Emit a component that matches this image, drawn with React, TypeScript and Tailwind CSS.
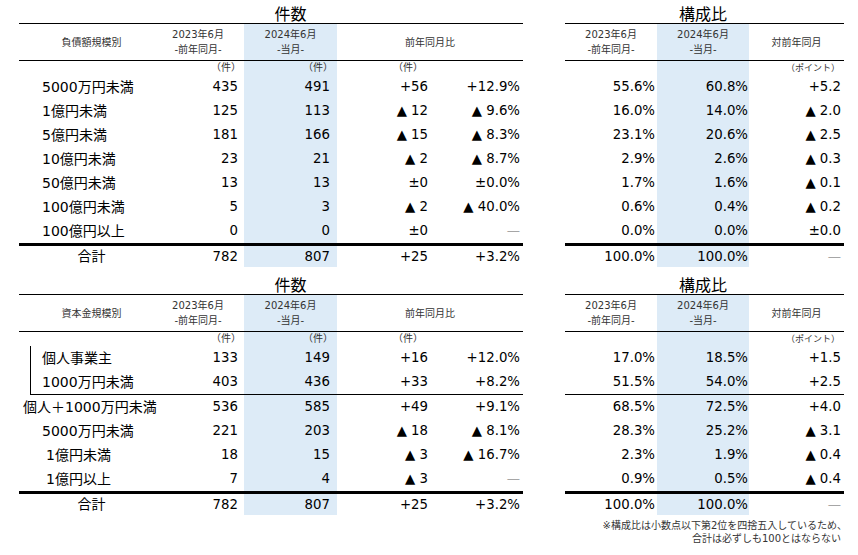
import React from "react"

const HL = "bg-[#ddebf7]"
const L_COLS = "grid-cols-[133px_92px_93px_93px_93px]"
const L_COLS_IN = "grid-cols-[121px_92px_93px_93px_93px]"
const R_COLS = "grid-cols-[92px_92px_95px]"

type Line = { label: string; v: string[]; r: string[] }

const debt: Line[] = [
  { label: "5000万円未満", v: ["435", "491", "+56", "+12.9%"], r: ["55.6%", "60.8%", "+5.2"] },
  { label: "1億円未満", v: ["125", "113", "▲ 12", "▲ 9.6%"], r: ["16.0%", "14.0%", "▲ 2.0"] },
  { label: "5億円未満", v: ["181", "166", "▲ 15", "▲ 8.3%"], r: ["23.1%", "20.6%", "▲ 2.5"] },
  { label: "10億円未満", v: ["23", "21", "▲ 2", "▲ 8.7%"], r: ["2.9%", "2.6%", "▲ 0.3"] },
  { label: "50億円未満", v: ["13", "13", "±0", "±0.0%"], r: ["1.7%", "1.6%", "▲ 0.1"] },
  { label: "100億円未満", v: ["5", "3", "▲ 2", "▲ 40.0%"], r: ["0.6%", "0.4%", "▲ 0.2"] },
  { label: "100億円以上", v: ["0", "0", "±0", "—"], r: ["0.0%", "0.0%", "±0.0"] },
]

const capSub: Line[] = [
  { label: "個人事業主", v: ["133", "149", "+16", "+12.0%"], r: ["17.0%", "18.5%", "+1.5"] },
  { label: "1000万円未満", v: ["403", "436", "+33", "+8.2%"], r: ["51.5%", "54.0%", "+2.5"] },
]

const capRest: (Line & { pad: string })[] = [
  { label: "個人＋1000万円未満", pad: "pl-[4px]", v: ["536", "585", "+49", "+9.1%"], r: ["68.5%", "72.5%", "+4.0"] },
  { label: "5000万円未満", pad: "pl-[23px]", v: ["221", "203", "▲ 18", "▲ 8.1%"], r: ["28.3%", "25.2%", "▲ 3.1"] },
  { label: "1億円未満", pad: "pl-[27px]", v: ["18", "15", "▲ 3", "▲ 16.7%"], r: ["2.3%", "1.9%", "▲ 0.4"] },
  { label: "1億円以上", pad: "pl-[27px]", v: ["7", "4", "▲ 3", "—"], r: ["0.9%", "0.5%", "▲ 0.4"] },
]

const total: Line = { label: "合計", v: ["782", "807", "+25", "+3.2%"], r: ["100.0%", "100.0%", "—"] }

function Val({ s }: { s: string }) {
  if (s === "—") return <span className="text-[#a6a6a6]">—</span>
  return <span>{s}</span>
}

function LeftCells({ label, labelCls, v }: { label: string; labelCls: string; v: string[] }) {
  return (
    <>
      <div className={`flex items-center text-[14px] whitespace-nowrap ${labelCls}`}>{label}</div>
      <div className="flex items-center justify-end pr-[6px]"><Val s={v[0]} /></div>
      <div className={`flex items-center justify-end pr-[7px] ${HL}`}><Val s={v[1]} /></div>
      <div className="flex items-center justify-end pr-[2px]"><Val s={v[2]} /></div>
      <div className="flex items-center justify-end pr-[3px]"><Val s={v[3]} /></div>
    </>
  )
}

function RightCells({ r }: { r: string[] }) {
  return (
    <>
      <div className="flex items-center justify-end pr-[2px]"><Val s={r[0]} /></div>
      <div className={`flex items-center justify-end pr-[1px] ${HL}`}><Val s={r[1]} /></div>
      <div className="flex items-center justify-end pr-[3px]"><Val s={r[2]} /></div>
    </>
  )
}

function LeftHead({ title, label, titleH }: { title: string; label: string; titleH: string }) {
  return (
    <>
      <div className={`grid ${L_COLS} ${titleH}`}>
        <div className="col-start-3 flex items-center justify-center pt-[3px] text-[16px]">{title}</div>
      </div>
      <div className={`grid ${L_COLS} h-[38px] border-y border-black text-[10px] leading-[15px] text-[#333]`}>
        <div className="flex items-center justify-center pl-[12px]">{label}</div>
        <div className="flex flex-col items-center justify-center"><span>2023年6月</span><span>-前年同月-</span></div>
        <div className={`flex flex-col items-center justify-center ${HL}`}><span>2024年6月</span><span>-当月-</span></div>
        <div className="col-span-2 flex items-center justify-center">前年同月比</div>
      </div>
      <div className={`grid ${L_COLS} h-[14px] text-[10px] leading-[14px] text-[#333]`}>
        <div />
        <div className="flex items-center justify-end pr-[3px]">（件）</div>
        <div className={`flex items-center justify-end pr-[4px] ${HL}`}>（件）</div>
        <div className="flex items-center justify-end pr-[7px]">（件）</div>
        <div />
      </div>
    </>
  )
}

function RightHead({ titleH }: { titleH: string }) {
  return (
    <>
      <div className={`grid ${R_COLS} ${titleH}`}>
        <div className="col-start-2 flex items-center justify-center pt-[3px] text-[16px]">構成比</div>
      </div>
      <div className={`grid ${R_COLS} h-[38px] border-y border-black text-[10px] leading-[15px] text-[#333]`}>
        <div className="flex flex-col items-center justify-center"><span>2023年6月</span><span>-前年同月-</span></div>
        <div className={`flex flex-col items-center justify-center ${HL}`}><span>2024年6月</span><span>-当月-</span></div>
        <div className="flex items-center justify-center">対前年同月</div>
      </div>
      <div className={`grid ${R_COLS} h-[14px] text-[9px] leading-[14px] text-[#333]`}>
        <div />
        <div className={HL} />
        <div className="flex items-center justify-end pr-[4px]">（ポイント）</div>
      </div>
    </>
  )
}

function TotalLeft() {
  return (
    <div className={`grid ${L_COLS} h-[24px] border-t-[3px] border-black`}>
      <LeftCells label={total.label} labelCls="justify-center pl-[12px]" v={total.v} />
    </div>
  )
}

function TotalRight() {
  return (
    <div className={`grid ${R_COLS} h-[24px] border-t-[3px] border-black`}>
      <RightCells r={total.r} />
    </div>
  )
}

export default function App() {
  return (
    <div className="w-[858px] h-[555px] overflow-hidden bg-white pl-[19px] text-[13.3px] text-black font-['DejaVu_Sans','Noto_Sans_CJK_JP',sans-serif]">
      {/* 負債額規模別 */}
      <div className="flex gap-[42px]">
        <div className="w-[504px]">
          <LeftHead title="件数" label="負債額規模別" titleH="h-[23px]" />
          {debt.map((d) => (
            <div key={d.label} className={`grid ${L_COLS} h-[24px]`}>
              <LeftCells label={d.label} labelCls="pl-[23px]" v={d.v} />
            </div>
          ))}
          <TotalLeft />
        </div>
        <div className="w-[279px]">
          <RightHead titleH="h-[23px]" />
          {debt.map((d) => (
            <div key={d.label} className={`grid ${R_COLS} h-[24px]`}>
              <RightCells r={d.r} />
            </div>
          ))}
          <TotalRight />
        </div>
      </div>

      {/* 資本金規模別 */}
      <div className="flex gap-[42px]">
        <div className="w-[504px]">
          <LeftHead title="件数" label="資本金規模別" titleH="h-[27px] pt-[4px]" />
          <div className="ml-[11px] border-l border-b border-black">
            {capSub.map((d) => (
              <div key={d.label} className={`grid ${L_COLS_IN} h-[24px]`}>
                <LeftCells label={d.label} labelCls="pl-[11px]" v={d.v} />
              </div>
            ))}
          </div>
          {capRest.map((d) => (
            <div key={d.label} className={`grid ${L_COLS} h-[24px]`}>
              <LeftCells label={d.label} labelCls={d.pad} v={d.v} />
            </div>
          ))}
          <TotalLeft />
        </div>
        <div className="w-[279px]">
          <RightHead titleH="h-[27px] pt-[4px]" />
          {capSub.map((d, i) => (
            <div key={d.label} className={`grid ${R_COLS} ${i === 1 ? "h-[25px] border-b border-black" : "h-[24px]"}`}>
              <RightCells r={d.r} />
            </div>
          ))}
          {capRest.map((d) => (
            <div key={d.label} className={`grid ${R_COLS} h-[24px]`}>
              <RightCells r={d.r} />
            </div>
          ))}
          <TotalRight />
        </div>
      </div>

      <div className="mt-[4px] flex flex-col items-end pr-[17px] text-[10px] leading-[13px] text-[#333]">
        <span className="mr-[-6px]">※構成比は小数点以下第2位を四捨五入しているため、</span>
        <span>合計は必ずしも100とはならない</span>
      </div>
    </div>
  )
}
